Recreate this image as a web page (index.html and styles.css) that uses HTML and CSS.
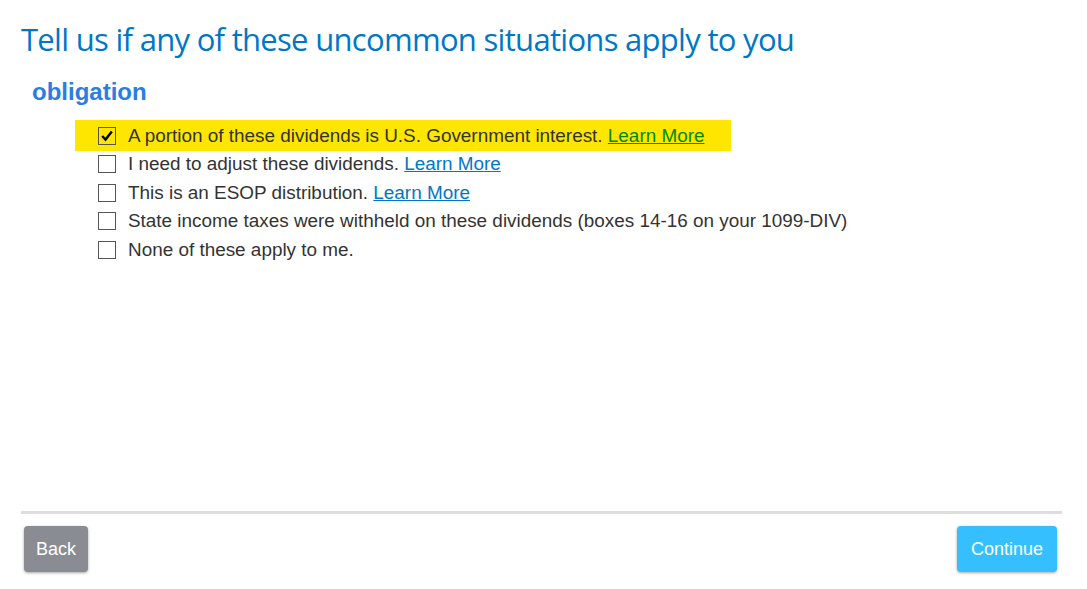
FILE: index.html
```html
<!DOCTYPE html>
<html lang="en">
<head>
    <meta charset="UTF-8">
    <meta name="viewport" content="width=device-width, initial-scale=1.0">
    <title>Uncommon Situations</title>
    <link rel="stylesheet" href="styles.css">
</head>
<body>

    <div class="page">
        <h1>Tell us if any of these uncommon situations apply to you</h1>
        <h2>obligation</h2>

        <div class="options">
            <label class="option highlighted">
                <span class="box checked">
                    <svg viewBox="0 0 16 16" width="16" height="16"><path d="M3.2 8 L6.5 11.6 L12.8 3.6" fill="none" stroke="#000" stroke-width="2.4"/></svg>
                </span>
                <span>A portion of these dividends is U.S. Government interest. <a href="#">Learn More</a></span>
            </label>
            <label class="option">
                <span class="box"></span>
                <span>I need to adjust these dividends. <a href="#">Learn More</a></span>
            </label>
            <label class="option">
                <span class="box"></span>
                <span>This is an ESOP distribution. <a href="#">Learn More</a></span>
            </label>
            <label class="option">
                <span class="box"></span>
                <span>State income taxes were withheld on these dividends (boxes 14-16 on your 1099-DIV)</span>
            </label>
            <label class="option">
                <span class="box"></span>
                <span>None of these apply to me.</span>
            </label>
        </div>

        <div class="footer">
            <button class="back">Back</button>
            <button class="continue">Continue</button>
        </div>
    </div>

</body>
</html>
```

FILE: styles.css
```css
body {
    font-family: "Liberation Sans", Arial, sans-serif;
    background: #fff;
    margin: 0;
    color: #333;
}

.page {
    width: 1041px;
    height: 589px;
    padding: 0 0 0 21px;
    display: flex;
    flex-direction: column;
}

h1 {
    font-family: "Open Sans", sans-serif;
    font-weight: 400;
    font-size: 31px;
    letter-spacing: -0.7px;
    color: #0077c5;
    margin: 19px 0 0;
    line-height: 40px;
}

h2 {
    font-size: 24px;
    font-weight: bold;
    color: #2b7de0;
    margin: 18px 0 0 11px;
    line-height: 30px;
}

.options {
    margin: 13px 0 0 54px;
}

.option {
    display: flex;
    align-items: center;
    height: 28.5px;
    font-size: 18.9px;
    padding-left: 23px;
    white-space: nowrap;
}

.option.highlighted {
    background: #ffe600;
    width: 633px;
    height: 31px;
    margin-bottom: -1px;
}

.box {
    width: 16px;
    height: 16px;
    border: 1px solid #555;
    margin-right: 12px;
    display: flex;
    align-items: center;
    justify-content: center;
    flex-shrink: 0;
}

.option a {
    color: #0077c5;
}

.option.highlighted a {
    color: #008a00;
}

.footer {
    margin-top: auto;
    margin-bottom: 17px;
    border-top: 3px solid #dedede;
    width: 1041px;
    padding-top: 12px;
    display: flex;
    justify-content: space-between;
}

button {
    font-family: "Liberation Sans", Arial, sans-serif;
    font-size: 18px;
    color: #fff;
    border: none;
    border-radius: 4px;
    height: 46px;
    box-shadow: 0 1px 3px rgba(0,0,0,0.35);
    cursor: pointer;
}

.back {
    background: #898c92;
    width: 64px;
    margin-left: 3px;
}

.continue {
    background: #35bfff;
    width: 100px;
    margin-right: 5px;
}
```
